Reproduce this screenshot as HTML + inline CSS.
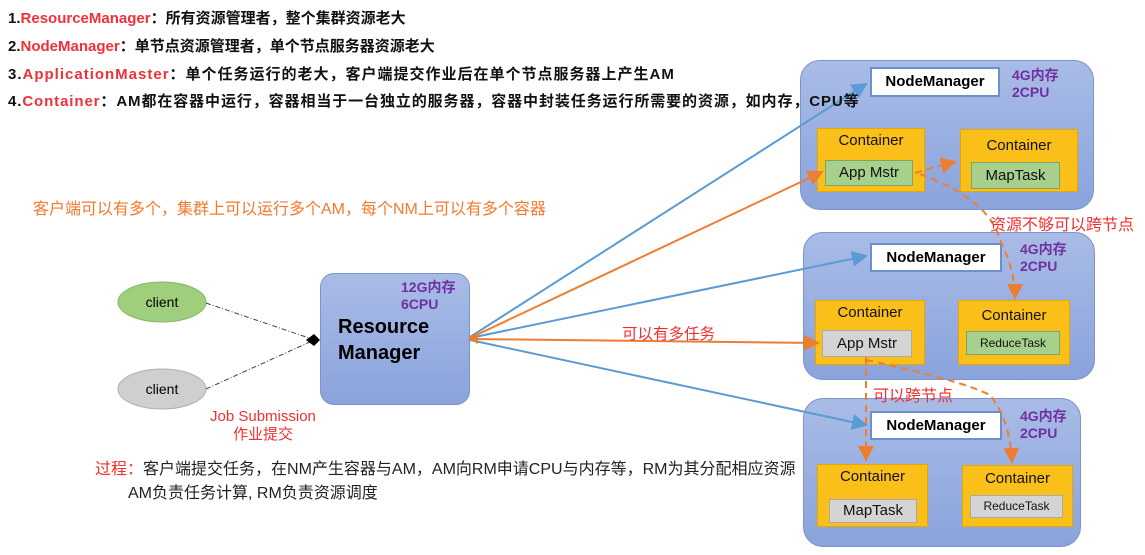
<!DOCTYPE html>
<html><head><meta charset="utf-8"><style>
body{margin:0;width:1145px;height:555px;background:#fff;position:relative;overflow:hidden;font-family:"Liberation Sans","Noto Sans CJK SC",sans-serif}
.a{position:absolute;white-space:nowrap}
.h{font-weight:bold;font-size:15px;color:#111;left:8px;z-index:5}
.h span{color:#f0303a}
.node{position:absolute;background:linear-gradient(#a9bce6,#8aa3dc);border:1px solid #7d93c9;border-radius:20px}
.nm{position:absolute;background:#fff;border:2px solid #6d8fd0;font-weight:bold;font-size:15px;text-align:center;box-sizing:border-box;line-height:26px}
.ct{position:absolute;background:#fbbf1a;border:1px solid #e6a800;font-size:15px;text-align:center;box-sizing:border-box;padding-top:3px;color:#111}
.in{position:absolute;border:1px solid #8a8;font-size:15px;text-align:center;box-sizing:border-box;color:#111}
.g{background:#a7d08c;border-color:#7aa763}
.gr{background:#d4d4d4;border-color:#aaa}
.pu{color:#7030a0;font-weight:bold;font-size:14px;line-height:17px}
.red{color:#f03030}
</style></head><body>
<div class="a h" style="top:7px">1.<span>ResourceManager</span>：所有资源管理者，整个集群资源老大</div>
<div class="a h" style="top:35px">2.<span>NodeManager</span>：单节点资源管理者，单个节点服务器资源老大</div>
<div class="a h" style="top:63px;letter-spacing:1px">3.<span>ApplicationMaster</span>：单个任务运行的老大，客户端提交作业后在单个节点服务器上产生AM</div>
<div class="a h" style="top:90px;letter-spacing:0.9px">4.<span>Container</span>：AM都在容器中运行，容器相当于一台独立的服务器，容器中封装任务运行所需要的资源，如内存，CPU等</div>

<div class="a" style="left:33px;top:195px;font-size:16px;color:#f07a30">客户端可以有多个，集群上可以运行多个AM，每个NM上可以有多个容器</div>

<div class="node" style="left:800px;top:60px;width:292px;height:148px"></div>
<div class="node" style="left:803px;top:232px;width:290px;height:146px"></div>
<div class="node" style="left:803px;top:398px;width:276px;height:147px"></div>

<div class="nm" style="left:870px;top:67px;width:130px;height:30px">NodeManager</div>
<div class="a pu" style="left:1012px;top:67px">4G内存<br>2CPU</div>
<div class="ct" style="left:817px;top:128px;width:108px;height:64px">Container</div>
<div class="in g" style="left:825px;top:160px;width:88px;height:26px;line-height:24px">App Mstr</div>
<div class="ct" style="left:960px;top:129px;width:118px;height:63px;padding-top:7px">Container</div>
<div class="in g" style="left:971px;top:162px;width:89px;height:27px;line-height:25px">MapTask</div>

<div class="nm" style="left:870px;top:243px;width:132px;height:29px">NodeManager</div>
<div class="a pu" style="left:1020px;top:241px">4G内存<br>2CPU</div>
<div class="ct" style="left:815px;top:300px;width:110px;height:65px">Container</div>
<div class="in gr" style="left:822px;top:330px;width:90px;height:27px;line-height:25px">App Mstr</div>
<div class="ct" style="left:958px;top:300px;width:112px;height:65px;padding-top:6px">Container</div>
<div class="in g" style="left:966px;top:331px;width:94px;height:24px;line-height:22px;font-size:12px">ReduceTask</div>

<div class="nm" style="left:870px;top:411px;width:132px;height:29px">NodeManager</div>
<div class="a pu" style="left:1020px;top:408px">4G内存<br>2CPU</div>
<div class="ct" style="left:817px;top:464px;width:111px;height:63px">Container</div>
<div class="in gr" style="left:829px;top:499px;width:88px;height:24px;line-height:22px">MapTask</div>
<div class="ct" style="left:962px;top:465px;width:111px;height:62px;padding-top:4px">Container</div>
<div class="in gr" style="left:970px;top:495px;width:93px;height:23px;line-height:21px;font-size:12px">ReduceTask</div>

<div class="node" style="left:320px;top:273px;width:148px;height:130px;border-radius:14px"></div>
<div class="a pu" style="left:401px;top:279px">12G内存<br>6CPU</div>
<div class="a" style="left:338px;top:314px;font-weight:bold;font-size:20px;line-height:26px">Resource<br>Manager</div>

<svg class="a" style="left:0;top:0" width="1145" height="555">
<defs>
<marker id="mb" markerWidth="8" markerHeight="8" refX="7" refY="4" orient="auto"><path d="M0,0L8,4L0,8z" fill="#5b9bd5"/></marker>
<marker id="mo" markerWidth="8" markerHeight="8" refX="7" refY="4" orient="auto"><path d="M0,0L8,4L0,8z" fill="#ed7d31"/></marker>
</defs>
<ellipse cx="162" cy="302" rx="44" ry="20" fill="#9fcf7c" stroke="#86b865"/>
<ellipse cx="162" cy="389" rx="44" ry="20" fill="#cfcfcf" stroke="#b0b0b0"/>
<text x="162" y="307" font-size="14" text-anchor="middle" font-family="Liberation Sans">client</text>
<text x="162" y="394" font-size="14" text-anchor="middle" font-family="Liberation Sans">client</text>
<path d="M206,303L312,339M206,389L312,341" stroke="#444" stroke-dasharray="5,2,1,2" fill="none"/>
<path d="M306,340L314,334L320,340L314,346z" fill="#000"/>
<g stroke="#5b9bd5" stroke-width="2" fill="none">
<path d="M470,337L866,84" marker-end="url(#mb)"/>
<path d="M470,338L866,256" marker-end="url(#mb)"/>
<path d="M470,340L866,425" marker-end="url(#mb)"/>
</g>
<g stroke="#ed7d31" stroke-width="2" fill="none">
<path d="M470,338L822,172" marker-end="url(#mo)"/>
<path d="M470,339L818,343" marker-end="url(#mo)"/>
</g>
<path d="M478,332L468,338L478,344z" fill="#ed7d31"/>
<g stroke="#ed7d31" stroke-width="2" fill="none" stroke-dasharray="7,5">
<path d="M915,173Q930,168 955,162" marker-end="url(#mo)"/>
<path d="M920,174Q990,200 1000,240Q1015,270 1015,298" marker-end="url(#mo)"/>
<path d="M866,357L866,460" marker-end="url(#mo)"/>
<path d="M866,360Q960,380 990,395Q1010,420 1012,462" marker-end="url(#mo)"/>
</g>
</svg>

<div class="a" style="left:990px;top:211px;font-size:16px;color:#f03030">资源不够可以跨节点</div>
<div class="a" style="left:622px;top:322px;font-size:15.5px;color:#f03030">可以有多任务</div>
<div class="a" style="left:873px;top:382px;font-size:16px;color:#f03030">可以跨节点</div>
<div class="a red" style="left:210px;top:408px;font-size:15px;text-align:center;line-height:18px">Job Submission<br>作业提交</div>
<div class="a" style="left:95px;top:455px;font-size:16px;color:#222"><span class="red">过程：</span>客户端提交任务，在NM产生容器与AM，AM向RM申请CPU与内存等，RM为其分配相应资源</div>
<div class="a" style="left:128px;top:479px;font-size:16px;color:#222">AM负责任务计算, RM负责资源调度</div>
</body></html>
